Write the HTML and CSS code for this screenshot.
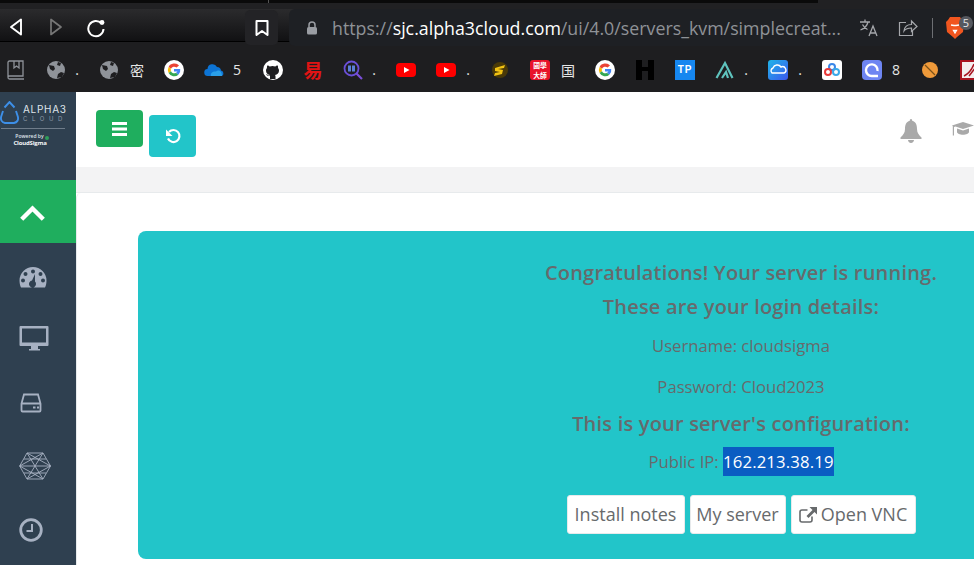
FILE: index.html
```html
<!DOCTYPE html>
<html lang="en">
<head>
<meta charset="utf-8">
<title>Alpha3 Cloud</title>
<link rel="stylesheet" href="styles.css">
</head>
<body>
<div class="browser">
  <div class="tabstrip"><div class="tabline"></div></div>
  <div class="toolbar">
    <svg class="nav nav-back" viewBox="0 0 14 18"><path d="M12 1.500v15L2 9z" fill="none" stroke="#fff" stroke-width="1.900" stroke-linejoin="round"/></svg>
    <svg class="nav nav-fwd" viewBox="0 0 14 18"><path d="M2 1.500v15L12 9z" fill="none" stroke="#777" stroke-width="1.700" stroke-linejoin="round"/></svg>
    <svg class="nav nav-reload" viewBox="0 0 20 20"><path d="M15.500 5.500A7.600 7.600 0 1 0 17.500 11" fill="none" stroke="#fff" stroke-width="2"/><circle cx="16" cy="4.500" r="2.400" fill="#fff"/></svg>
    <div class="bookmark-btn"><svg viewBox="0 0 14 16" class="bookmark-ico"><path d="M1.500 1h11v14L7 11l-5.500 4z" fill="none" stroke="#fff" stroke-width="2" stroke-linejoin="round"/></svg></div>
    <div class="omnibox">
      <svg class="lock" viewBox="0 0 12 14"><path d="M3 6V4a3 3 0 0 1 6 0v2" fill="none" stroke="#9a9da3" stroke-width="1.500"/><rect x="1" y="6" width="10" height="7.500" rx="1.500" fill="#9a9da3"/></svg>
      <div class="url"><span class="dim">https://</span>sjc.alpha3cloud.com<span class="dim">/ui/4.0/servers_kvm/simplecreat...</span></div>
      <svg class="omni-ico translate" viewBox="0 0 20 20"><path d="M1 4h10M6 1.500V4M9 4c-.8 3.500-3.500 6.500-7.500 8M3.500 6.500c1 2 3 4 5 5M10 18l4-10 4 10M11.500 15h5" fill="none" stroke="#a5a7ab" stroke-width="1.300"/></svg>
      <svg class="omni-ico share" viewBox="0 0 20 18"><path d="M8 3.500H1.500v13h13V12M6 12c.5-4 3.500-6.500 7.500-6.500V2l5.500 5.500-5.500 5V9C10 9 7.500 10 6 12z" fill="none" stroke="#a5a7ab" stroke-width="1.200"/></svg>
      <div class="omni-sep"></div>
      <div class="brave">
        <svg class="brave-ico" viewBox="0 0 18 23"><path d="M4 1h10l2 3 2 2-1 10-6 5-2 2-2-2-6-5-1-10 2-2z" fill="#f1561f"/><path d="M5 9l3 .5h2l3-.5M7.500 14.500h3L9 17z" fill="none" stroke="#fff" stroke-width="1.300"/></svg>
        <span class="brave-badge">5</span>
      </div>
    </div>
  </div>
  <div class="bookmarks">
    <div class="bm"><svg class="i" viewBox="0 0 20 20"><path d="M2 17V2.500A1.500 1.500 0 0 1 3.500 1H17v15H3.500a1.500 1.500 0 0 0 0 3H18M8 1v7l2.500-2L13 8V1" fill="none" stroke="#8f9399" stroke-width="1.300"/></svg></div>
    <div class="bm"><svg class="i" viewBox="0 0 20 20"><circle cx="10" cy="10" r="9" fill="#8f9399"/><path d="M3 5l5 1 1 3-2 2-3-2zM11 18l1-4 3-2 3 1-2 4zM12 2l3 1-1 3-3-1z" fill="#1e1e20"/></svg><span class="lbl w13">.</span></div>
    <div class="bm"><svg class="i" viewBox="0 0 20 20"><circle cx="10" cy="10" r="9" fill="#8f9399"/><path d="M3 5l5 1 1 3-2 2-3-2zM11 18l1-4 3-2 3 1-2 4zM12 2l3 1-1 3-3-1z" fill="#1e1e20"/></svg><span class="lbl w25 cjk">密</span></div>
    <div class="bm"><svg class="i" viewBox="0 0 20 20"><use href="#g-logo"/></svg></div>
    <div class="bm"><svg class="i" viewBox="0 0 20 20"><path d="M4 16a3.500 3.500 0 0 1-.5-7 5 5 0 0 1 9.500-2 4 4 0 0 1 4 3.500 3 3 0 0 1 1 5.500z" fill="#0d74d4"/><path d="M7 16c-1-3 2-5 5-4.500 2-2 6-1 6 4.500z" fill="#2a9fe8"/></svg><span class="lbl w19 pr2">5</span></div>
    <div class="bm"><svg class="i" viewBox="0 0 20 20"><circle cx="10" cy="10" r="10" fill="#fff"/><path d="M7 19v-3c-3 .5-3.500-1.500-4-2 1 0 1.500 1 2.500 1.500.5.300 1.500 0 1.500-.5-2.500-.5-4-2-4-4.500 0-1 .5-2 1-2.500-.2-.8 0-2 .3-2.500 1 0 1.900.5 2.500 1a7 7 0 0 1 5.400 0c.6-.5 1.500-1 2.500-1 .3.500.5 1.700.3 2.500.5.500 1 1.500 1 2.500 0 2.500-1.500 4-4 4.500.5.500.5 1 .5 1.500V19z" fill="#1e1e20"/></svg></div>
    <div class="bm"><span class="glyph-red">易</span></div>
    <div class="bm"><svg class="i" viewBox="0 0 20 20"><circle cx="8.500" cy="8.500" r="7" fill="none" stroke="#6a4fd8" stroke-width="1.800"/><path d="M13.500 13.500L19 19" stroke="#7a4fd8" stroke-width="2.200"/><path d="M5 5.500h3v6H5zM9 5.500h3v6H9z" fill="#5b7fd8"/></svg><span class="lbl w13">.</span></div>
    <div class="bm"><svg class="i" viewBox="0 0 20 20"><use href="#yt-logo"/></svg></div>
    <div class="bm"><svg class="i" viewBox="0 0 20 20"><use href="#yt-logo"/></svg><span class="lbl w14">.</span></div>
    <div class="bm"><svg class="i" viewBox="0 0 20 20"><circle cx="10" cy="10" r="8" fill="#4a3a08"/><path d="M5 8l10-3-1 3-6 1 5 1-1 4-8 2 1-3 5-1-5-1z" fill="#f2c313"/></svg></div>
    <div class="bm"><span class="guoxue"><span class="gx-row">國學</span><span class="gx-row">大師</span></span><span class="lbl w25 cjk">国</span></div>
    <div class="bm"><svg class="i" viewBox="0 0 20 20"><use href="#g-logo"/></svg></div>
    <div class="bm"><svg class="i" viewBox="0 0 20 20"><path d="M1 0h6v7h6V0h6v20h-6v-9H7v9H1z" fill="#000"/></svg></div>
    <div class="bm"><span class="tp">TP</span></div>
    <div class="bm"><svg class="i" viewBox="0 0 20 20"><path d="M1.500 18L10 3l7.500 15M7 18l4-6 2 6" fill="none" stroke="#5fc3bd" stroke-width="2.200"/></svg><span class="lbl w13">.</span></div>
    <div class="bm"><svg class="i" viewBox="0 0 20 20"><defs><linearGradient id="cl" x1="0" y1="0" x2="1" y2="1"><stop offset="0" stop-color="#1fb6e8"/><stop offset="1" stop-color="#3c56ee"/></linearGradient></defs><rect width="20" height="20" rx="3" fill="url(#cl)"/><path d="M4 13a3 3 0 0 1 1-5 4.500 4.500 0 0 1 8-1 3 3 0 0 1 3 6z" fill="none" stroke="#fff" stroke-width="1.400"/></svg><span class="lbl w14">.</span></div>
    <div class="bm"><svg class="i" viewBox="0 0 20 20"><rect width="20" height="20" rx="3" fill="#fff"/><circle cx="10" cy="7" r="3" fill="none" stroke="#3a86e8" stroke-width="2"/><circle cx="6" cy="12" r="3" fill="none" stroke="#e83a3a" stroke-width="2"/><circle cx="14" cy="12" r="3" fill="none" stroke="#3aa8e8" stroke-width="2"/></svg></div>
    <div class="bm"><svg class="i" viewBox="0 0 20 20"><rect width="20" height="20" rx="4" fill="#6e85f2"/><path d="M15.500 11A5.800 5.800 0 1 0 10 16h6" fill="none" stroke="#fff" stroke-width="2.400"/></svg><span class="lbl w18">8</span></div>
    <div class="bm"><svg class="i" viewBox="0 0 20 20"><circle cx="10" cy="10" r="8" fill="#ef9a3a"/><path d="M5 5l10 10" stroke="#7a5018" stroke-width="1.300"/></svg></div>
    <div class="bm"><svg class="i" viewBox="0 0 20 20"><rect width="20" height="20" fill="#a81420"/><rect x="2" y="2" width="16" height="16" fill="#f3eeee"/><path d="M4 16c4-2 8-7 10-12M9 16l7-9" fill="none" stroke="#a81420" stroke-width="1.500"/></svg></div>
  </div>
</div>

<svg class="defs" aria-hidden="true">
  <symbol id="g-logo" viewBox="0 0 20 20">
    <circle cx="10" cy="10" r="10" fill="#fff"/>
    <path d="M15 5.500A6.300 6.300 0 0 0 4.600 7L7 8.800a3.400 3.400 0 0 1 5.500-1.200z" fill="#ea4335"/>
    <path d="M4.600 7a6.300 6.300 0 0 0 0 6L7 11.200a3.400 3.400 0 0 1 0-2.400z" fill="#fbbc05"/>
    <path d="M4.600 13a6.300 6.300 0 0 0 9.800 1.700L12 12.800a3.400 3.400 0 0 1-5-1.600z" fill="#34a853"/>
    <path d="M16.200 9H10v2.500h3.400a3 3 0 0 1-1.400 1.300l2.400 1.900A6.300 6.300 0 0 0 16.200 9z" fill="#4285f4"/>
  </symbol>
  <symbol id="yt-logo" viewBox="0 0 20 20">
    <rect y="3" width="20" height="14" rx="4" fill="#f00"/>
    <path d="M8 7l5.500 3L8 13z" fill="#fff"/>
  </symbol>
</svg>

<div class="app">
  <aside class="sidebar">
    <div class="logo">
      <div class="logo-top">
        <svg class="logo-mark" viewBox="0 0 20 23"><path d="M4.500 6.500L9.500 1l5 5.500M3 10l-1.800 5.500C.3 19 2 21.500 5 22h9c3-.5 4.800-3 3.800-6.500L16 10" fill="none" stroke="#3d8fe8" stroke-width="1.900"/></svg>
        <div class="logo-words"><span class="logo-alpha">ALPHA3</span><span class="logo-cloud">CLOUD</span></div>
      </div>
      <div class="logo-rule"></div>
      <div class="logo-powered">Powered by</div>
      <div class="logo-sigma">CloudSigma<i class="logo-dot"></i></div>
    </div>
    <div class="nav-active"><svg class="chev" viewBox="0 0 25 16"><path d="M1.700 14.300L12.500 3.500l10.800 10.800" fill="none" stroke="#fff" stroke-width="4.400"/></svg></div>
    <ul class="nav-list">
      <li class="nav-item"><svg class="side-ico s-gauge" viewBox="0 0 28 22"><path fill-rule="evenodd" d="M14 1a13.500 13.500 0 0 1 13.500 13.500c0 2.500-.5 5-1.500 7H2c-1-2-1.500-4.500-1.500-7A13.500 13.500 0 0 1 14 1zM14 3.500a2 2 0 1 0 0 4 2 2 0 0 0 0-4zM6.500 6a2 2 0 1 0 0 4 2 2 0 0 0 0-4zM21.500 6a2 2 0 1 0 0 4 2 2 0 0 0 0-4zM4 12.500a2 2 0 1 0 0 4 2 2 0 0 0 0-4zM24 12.500a2 2 0 1 0 0 4 2 2 0 0 0 0-4zM16 8l-3 6.500a3.500 3.500 0 1 0 3 1z" fill="#a7b1c2"/></svg></li>
      <li class="nav-item"><svg class="side-ico s-desk" viewBox="0 0 30 26"><path fill-rule="evenodd" d="M1.500 1h27a1 1 0 0 1 1 1v18a1 1 0 0 1-1 1H19v3h2v1.500H10V24h2v-3H1.500a1 1 0 0 1-1-1V2a1 1 0 0 1 1-1zM3 3.500V17.500h24V3.500z" fill="#a7b1c2"/></svg></li>
      <li class="nav-item"><svg class="side-ico s-hdd" viewBox="0 0 24 20"><path d="M5 1.500h14l2.500 9v7a1 1 0 0 1-1 1h-17a1 1 0 0 1-1-1v-7zM3 10.500h18" fill="none" stroke="#a7b1c2" stroke-width="1.800"/><path d="M14 13.500h2.500V15.500H14zM18 13.500h2V15.500h-2z" fill="#a7b1c2"/></svg></li>
      <li class="nav-item"><svg class="side-ico s-hex" viewBox="0 0 32 28"><path d="M8 1h16l7.500 13L24 27H8L.7 14zM8 1l16 26M24 1L8 27M.7 14h30.800M8 1l23.500 13M24 1L.7 14M8 27l23.500-13M24 27L.7 14M5 7h22M5 21h22" fill="none" stroke="#a7b1c2" stroke-width=".9"/></svg></li>
      <li class="nav-item"><svg class="side-ico s-clock" viewBox="0 0 24 24"><circle cx="12" cy="12" r="10.300" fill="none" stroke="#a7b1c2" stroke-width="2.800"/><path d="M13 6v7H7.500" fill="none" stroke="#a7b1c2" stroke-width="2"/></svg></li>
    </ul>
  </aside>
  <main class="main">
    <header class="topbar">
      <button class="tbtn tbtn-green"><svg class="tbtn-ico" viewBox="0 0 15 14"><path d="M0 1.500h15M0 7h15M0 12.500h15" stroke="#fff" stroke-width="2.800"/></svg></button>
      <button class="tbtn tbtn-teal"><svg class="tbtn-ico undo" viewBox="0 0 16 16"><path d="M4 4a6 6 0 1 1-1 6.500" fill="none" stroke="#fff" stroke-width="2.200"/><path d="M1 1.500V8h6.500z" fill="#fff"/></svg></button>
      <div class="top-icons">
        <svg class="bell" viewBox="0 0 22 24"><path d="M11 0c1 0 1.200 1 1.200 1.800C16 3 17 6 17 10c0 4 2 6 4.500 8.500V20H.5v-1.500C3 16 5 14 5 10c0-4 1-7 4.800-8.200C9.800 1 10 0 11 0zM8 21h6c0 1.500-1.300 3-3 3s-3-1.500-3-3z" fill="#a9a9a9"/></svg>
        <svg class="cap" viewBox="0 0 22 15"><path d="M11 0l11 3.500L11 7 3.500 4.500 2 5v8.500H.8V4.300L0 3.500zM5 6.500L11 8.500l6-2v3.500c0 1.500-3 2.700-6 2.700s-6-1.200-6-2.700z" fill="#a9a9a9"/></svg>
      </div>
    </header>
    <div class="greybar"></div>
    <section class="panel">
      <div class="card">
        <h3 class="h h-first">Congratulations! Your server is running.</h3>
        <h3 class="h h-second">These are your login details:</h3>
        <p class="p p-user">Username: cloudsigma</p>
        <p class="p p-pass">Password: Cloud2023</p>
        <h3 class="h h-third">This is your server's configuration:</h3>
        <p class="p p-ip">Public IP: <span class="sel">162.213.38.19</span></p>
        <div class="actions">
          <a class="btn b-notes">Install notes</a>
          <a class="btn b-server">My server</a>
          <a class="btn b-vnc"><svg class="ext" viewBox="0 0 18 16"><path d="M13 9.500V13a2 2 0 0 1-2 2H3a2 2 0 0 1-2-2V5a2 2 0 0 1 2-2h5.500" fill="none" stroke="#676a6c" stroke-width="1.600"/><path d="M10.500 0H18v7.500l-2.500-2.500-6 6-2-2 6-6z" fill="#676a6c"/></svg>Open VNC</a>
        </div>
      </div>
    </section>
  </main>
</div>
</body>
</html>
```

FILE: styles.css
```css
* { box-sizing: border-box; }
html, body { margin: 0; padding: 0; }
body { width: 974px; height: 565px; overflow: hidden; background: #fff; font-family: "Open Sans", sans-serif; }

.defs { width: 0; height: 0; display: block; }

.browser { height: 92px; background: #1e1e20; }
.tabstrip { height: 9px; background: #212123; position: relative; }
.tabline { position: absolute; left: 268px; top: 0; width: 550px; height: 3px; background: #0a0a0a; border-left: 1px solid #555; }
.tabstrip::before { content: ""; position: absolute; left: 0; top: 0; width: 268px; height: 3px; background: #0a0a0a; }

.toolbar { height: 33px; display: flex; align-items: flex-start; background: linear-gradient(#2b2b2d, #111113); border-bottom: 1px solid #000; position: relative; }
.nav { flex: none; display: block; }
.nav-back { width: 14px; height: 18px; margin: 9px 0 0 9px; }
.nav-fwd { width: 14px; height: 18px; margin: 9px 0 0 26px; }
.nav-reload { width: 20px; height: 20px; margin: 9px 0 0 23px; }
.bookmark-btn { flex: none; width: 33px; height: 35px; margin: 1px 0 0 139px; background: #232326; border-radius: 5px; display: flex; align-items: center; justify-content: center; }
.bookmark-ico { width: 14px; height: 16px; }
.omnibox { flex: none; width: 686px; height: 37px; margin-left: 11px; background: #1e2024; border-radius: 6px 0 0 6px; display: flex; align-items: center; padding-left: 17px; }
.lock { width: 12px; height: 14px; flex: none; margin-top: 1px; }
.url { flex: none; width: 513px; margin-left: 14px; font-family: "Open Sans", sans-serif; font-size: 17.800px; color: #fff; white-space: nowrap; }
.dim { color: #8f9297; }
.omni-ico { flex: none; }
.translate { width: 20px; height: 20px; margin-left: 14px; }
.share { width: 20px; height: 18px; margin-left: 19px; }
.omni-sep { flex: none; width: 1px; height: 20px; background: #6d6f73; margin-left: 14px; }
.brave { flex: none; position: relative; width: 20px; height: 24px; margin-left: 13px; }
.brave-ico { width: 18px; height: 23px; display: block; }
.brave-badge { position: absolute; left: 13px; top: 0; width: 14px; height: 14px; border-radius: 50%; background: #55585f; color: #e8e8e8; font-size: 11px; line-height: 14px; text-align: center; }

.bookmarks { height: 50px; display: flex; align-items: center; gap: 20px; padding: 6px 0 0 6px; overflow: hidden; }
.bm { flex: none; display: flex; align-items: center; height: 20px; }
.i { width: 20px; height: 20px; display: block; flex: none; }
.lbl { display: block; flex: none; text-align: right; color: #e6e6e6; font-size: 14px; line-height: 20px; font-family: "Open Sans", sans-serif; }
.cjk { font-family: "Noto Sans CJK SC", sans-serif; }
.w13 { width: 13px; }
.w14 { width: 14px; }
.w18 { width: 18px; }
.w19 { width: 19px; }
.w25 { width: 25px; }
.pr2 { padding-right: 2px; }
.tp { display: block; width: 20px; height: 20px; background: #1687f0; color: #fff; font: 700 10px/20px "Liberation Sans", sans-serif; text-align: center; letter-spacing: .8px; }
.glyph-red { display: block; width: 20px; height: 20px; color: #e01414; font: 700 19px/20px "Noto Sans CJK SC", sans-serif; text-align: center; }
.guoxue { display: grid; grid-template-rows: 10px 10px; flex: none; width: 20px; height: 20px; background: #e8122a; border-radius: 3px; color: #fff; }
.gx-row { display: block; font: 700 6.800px/10px "Noto Sans CJK TC", sans-serif; text-align: center; white-space: nowrap; overflow: hidden; height: 10px; }

.app { display: flex; height: 473px; }
.sidebar { flex: none; width: 76px; background: #2f4050; overflow: hidden; }
.logo { height: 88px; padding-top: 9px; position: relative; }
.logo-top { display: flex; align-items: flex-start; }
.logo-mark { flex: none; width: 20px; height: 23px; }
.logo-words { display: flex; flex-direction: column; margin-left: 3px; padding-top: 3px; }
.logo-alpha { color: #dfe4ea; font: 400 10px/11px "Inter", sans-serif; letter-spacing: .7px; }
.logo-cloud { color: #8c98a6; font: 400 6px/8px "Inter", sans-serif; letter-spacing: 4.600px; }
.logo-rule { height: 1px; background: #6f7c8a; margin: 4px 0 0 1px; width: 64px; }
.logo-powered { color: #dfe4ea; font: 600 5px/6px "Open Sans", sans-serif; text-align: center; margin: 4px 17px 0 0; }
.logo-sigma { color: #f4f6f8; font: 700 6px/8px "Open Sans", sans-serif; letter-spacing: -.2px; text-align: center; margin-right: 16px; position: relative; }
.logo-dot { position: absolute; left: 45px; top: -3px; width: 4px; height: 4px; border-radius: 50%; background: #2f9e5a; }
.nav-active { height: 63px; background: #1fae5e; display: flex; align-items: center; padding: 3px 0 0 20px; }
.chev { width: 25px; height: 16px; display: block; }
.nav-list { list-style: none; margin: 0; padding: 23px 0 0 19px; }
.nav-item { display: block; }
.side-ico { display: block; }
.s-gauge { width: 28px; height: 22px; }
.s-desk { width: 30px; height: 26px; margin-top: 37px; }
.s-hdd { width: 24px; height: 20px; margin-top: 42px; }
.s-hex { width: 32px; height: 28px; margin-top: 39px; }
.s-clock { width: 24px; height: 24px; margin-top: 38px; }

.main { flex: 1; min-width: 0; position: relative; }
.topbar { height: 75px; background: #fff; display: flex; align-items: flex-start; padding: 18px 0 0 20px; }
.tbtn { flex: none; width: 47px; border: 0; padding: 0; border-radius: 4px; display: flex; align-items: center; justify-content: center; }
.tbtn-green { height: 37px; background: #1fae5e; }
.tbtn-teal { height: 42px; background: #22c5c9; margin: 5px 0 0 6px; }
.tbtn-ico { width: 15px; height: 14px; display: block; }
.undo { width: 16px; height: 16px; }
.top-icons { margin-left: auto; display: flex; align-items: flex-start; padding-top: 9px; gap: 30px; }
.bell { width: 22px; height: 24px; display: block; }
.cap { width: 22px; height: 15px; display: block; margin-top: 3px; }
.greybar { height: 26px; background: #f3f3f4; border-bottom: 1px solid #e7eaec; }
.panel { height: 372px; background: #fff; border-left: 1px solid #e7eaec; border-radius: 5px 0 0 0; padding: 38px 0 0 61px; overflow: hidden; }
.card { width: 1206px; height: 328px; background: #22c5c9; border-radius: 8px; color: #676a6c; text-align: center; padding-top: 28px; }
.h { margin: 0; font-size: 20px; font-weight: 600; line-height: 28px; letter-spacing: .2px; }
.h-second { margin-top: 6px; }
.h-third { margin-top: 12px; }
.p { margin: 0; font-size: 16.700px; line-height: 22px; }
.p-user { margin-top: 14px; }
.p-pass { margin-top: 19px; }
.p-ip { margin-top: 9px; line-height: 29px; }
.sel { background: #0a5dc2; color: #fff; display: inline-block; line-height: 29px; letter-spacing: .15px; }
.actions { display: flex; justify-content: center; gap: 5px; margin-top: 19px; }
.btn { flex: none; height: 39px; background: #fff; border: 1px solid #e7eaec; border-radius: 3px; color: #676a6c; font-size: 18px; line-height: 37px; display: flex; align-items: center; justify-content: center; white-space: nowrap; }
.b-notes { width: 118px; }
.b-server { width: 96px; }
.b-vnc { width: 125px; }
.ext { width: 18px; height: 16px; margin-right: 4px; flex: none; }
```
